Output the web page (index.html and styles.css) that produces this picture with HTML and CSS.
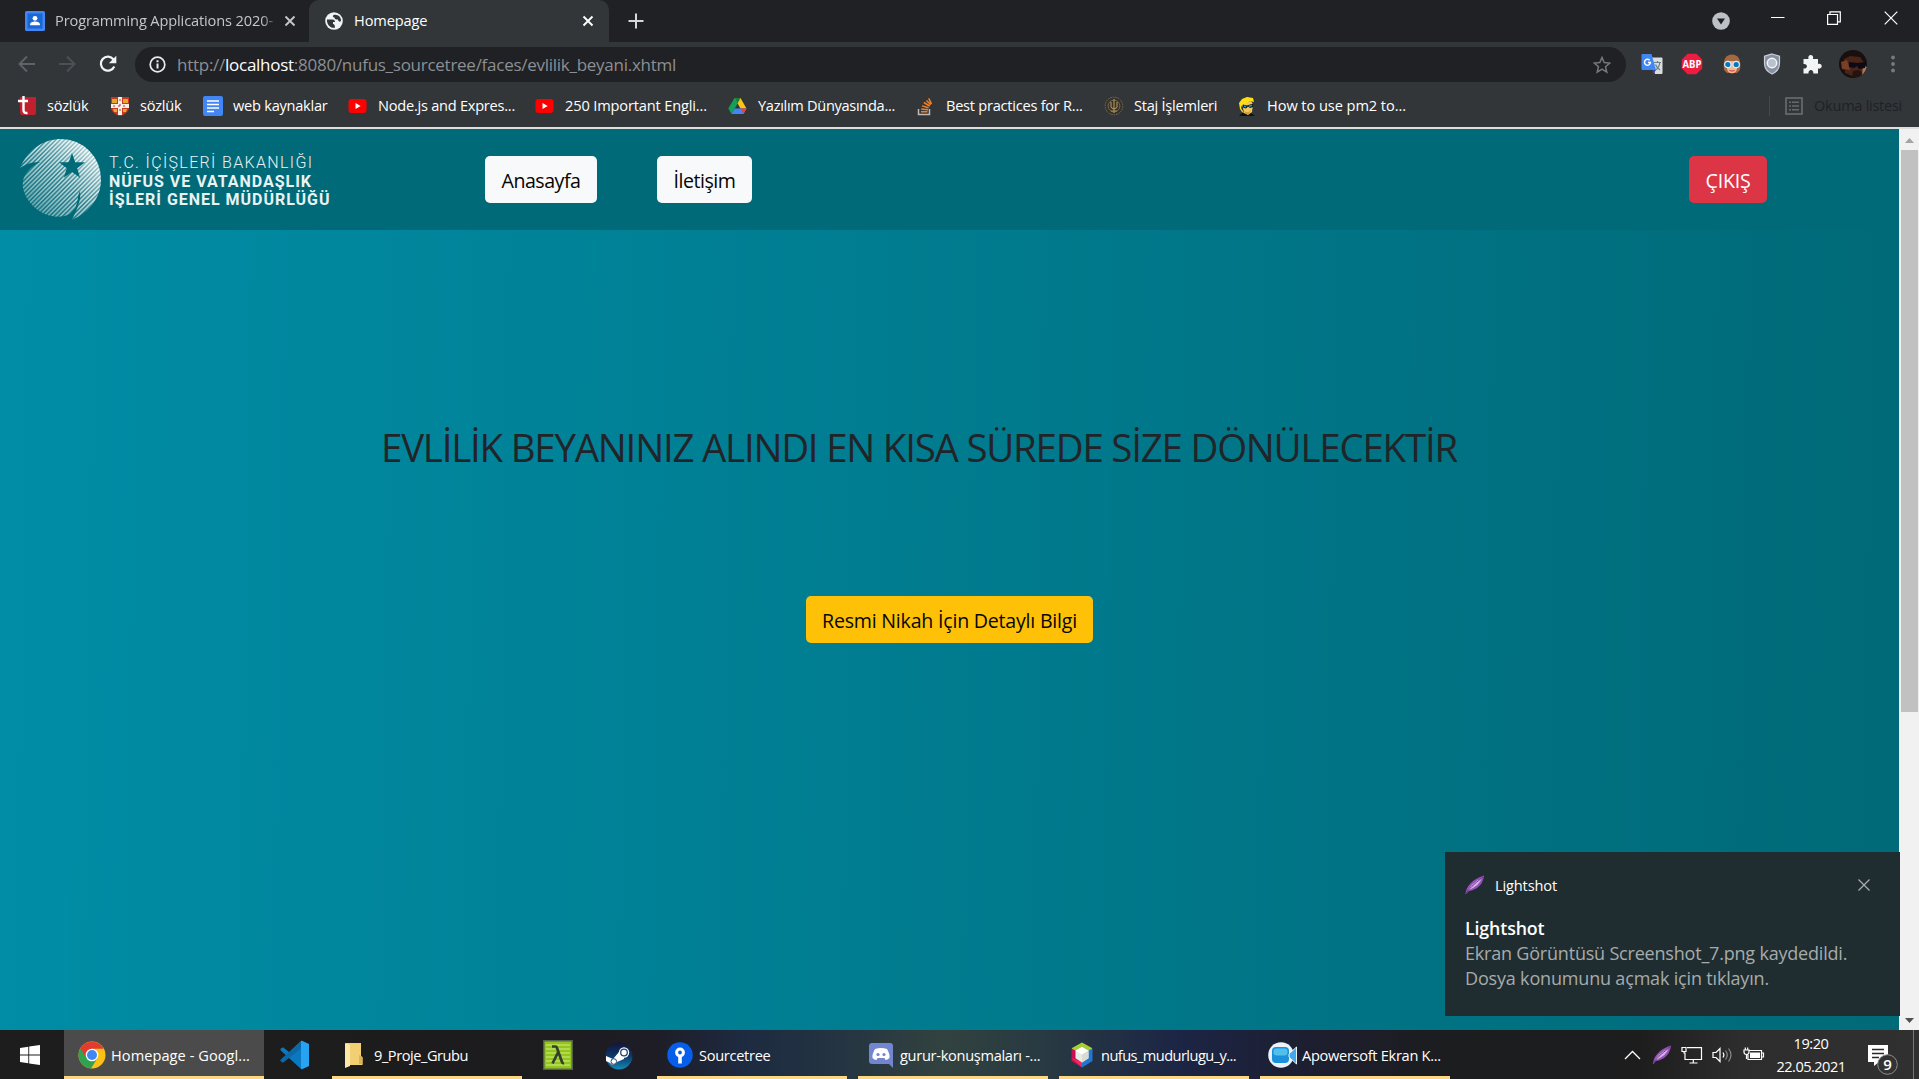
FILE: index.html
```html
<!DOCTYPE html>
<html lang="tr">
<head>
<meta charset="utf-8">
<title>Homepage</title>
<link rel="stylesheet" href="styles.css">
</head>
<body>
<div class="tabs">
  <div class="tab tab-first">
    <svg width="20" height="20" viewBox="0 0 20 20"><rect width="20" height="20" rx="1.5" fill="#4285f4"/><rect x="2.5" y="2.5" width="15" height="15" fill="#1967d2"/><circle cx="10" cy="7.3" r="2.4" fill="#fff"/><path d="M5 14.2c0-3 2.500-3.700 5-3.700s5 .7 5 3.700z" fill="#fff"/></svg>
    <span class="tab-title fade">Programming Applications 2020-</span>
    <svg class="tab-x" width="12" height="12" viewBox="0 0 12 12"><path d="M1.500 1.500l9 9m0-9l-9 9" stroke="#c4c7ca" stroke-width="1.900"/></svg>
  </div>
  <div class="tab tab-active">
    <svg width="18" height="18" viewBox="0 0 18 18"><circle cx="9" cy="9" r="8.800" fill="#f1f3f4"/><path d="M2 7.500h5.500q2.500 0 2.500 2.500h-2v2q2 0 2 3.800C5 16.500 1.500 12 2 7.500zM8.500 3q-1.500 2 1 2.500 0 2 2 2h1.500q0 2 1.800 2.300l1.200-.8C16.300 5 12.500 1.800 8.500 3z" fill="#323639"/></svg>
    <span class="tab-title">Homepage</span>
    <svg class="tab-x" width="12" height="12" viewBox="0 0 12 12"><path d="M1.500 1.500l9 9m0-9l-9 9" stroke="#fff" stroke-width="1.900"/></svg>
  </div>
  <svg class="new-tab" width="16" height="16" viewBox="0 0 16 16"><path d="M8 .5v15M.5 8h15" stroke="#d5d7d9" stroke-width="2"/></svg>
  <div class="window-controls">
    <svg width="18" height="18" viewBox="0 0 18 18"><circle cx="9" cy="9" r="8.800" fill="#bdc1c6"/><path d="M5 6.500h8l-4 6z" fill="#202124"/></svg>
    <svg width="14" height="14" viewBox="0 0 14 14"><path d="M0 6.500h13.500" stroke="#fff"/></svg>
    <svg width="14" height="14" viewBox="0 0 14 14"><path d="M.6 3.500h9.900v9.900H.6zM3 3.500V.8h10.300v10H10.500" fill="none" stroke="#fff" stroke-width="1.200"/></svg>
    <svg width="14" height="14" viewBox="0 0 14 14"><path d="M.7.7l12.600 12.600M13.300.7L.7 13.300" stroke="#fff" stroke-width="1.200"/></svg>
  </div>
</div>

<div class="toolbar">
  <svg class="back" width="18" height="18" viewBox="0 0 18 18"><path d="M17 9H2M9 1.500L1.500 9 9 16.500" fill="none" stroke="#5f6368" stroke-width="1.900"/></svg>
  <svg class="forward" width="18" height="18" viewBox="0 0 18 18"><path d="M1 9h15M9 1.500L16.500 9 9 16.500" fill="none" stroke="#4c5054" stroke-width="1.900"/></svg>
  <svg class="reload" width="18" height="18" viewBox="0 0 18 18"><path d="M15.300 11.500A7 7 0 1 1 14.500 4.500" fill="none" stroke="#f1f3f4" stroke-width="2.200"/><path d="M17.300.8v7.400H9.900z" fill="#f1f3f4"/></svg>
  <div class="address">
    <svg width="17" height="17" viewBox="0 0 17 17"><circle cx="8.500" cy="8.500" r="7.300" fill="none" stroke="#e8eaed" stroke-width="1.700"/><path d="M8.500 7.500v5M8.500 4.300v1.900" stroke="#e8eaed" stroke-width="2"/></svg>
    <span class="url">http://<b>localhost</b>:8080/nufus_sourcetree/faces/evlilik_beyani.xhtml</span>
    <svg class="star" width="18" height="18" viewBox="0 0 18 18"><path d="M9 1.500l2.200 5.100 5.500.5-4.200 3.600 1.300 5.400L9 13.200l-4.800 2.900 1.300-5.400L1.300 7.100l5.500-.5z" fill="none" stroke="#74787c" stroke-width="1.500"/></svg>
  </div>
  <div class="extensions">
    <svg width="22" height="22" viewBox="0 0 22 22"><path d="M10 4.500h10.500q1 0 1 1V20q0 1-1 1H14z" fill="#dadce0"/><path d="M13 9.500h7M16.500 8v1.500M14.500 17c3-2 4-4.500 4.300-7.500M14.500 11.500c1 2.500 2.500 4 4.500 5.500" fill="none" stroke="#6b8087" stroke-width="1.200"/><path d="M1.500 1h9l4.500 16H1.500q-1 0-1-1V2q0-1 1-1z" fill="#4286f4"/><path d="M11.500 17H15l-2.800 4z" fill="#3641b5"/><path d="M8.700 7.200A3 3 0 1 0 9.500 9.500H7" fill="none" stroke="#fff" stroke-width="1.400"/></svg>
    <svg width="22" height="22" viewBox="0 0 22 22"><path d="M6.600.8h8.800l5.800 5.800v8.800l-5.800 5.800H6.600L.8 15.400V6.600z" fill="#ed1c40"/><text x="11" y="15" text-anchor="middle" class="abp" textLength="19" lengthAdjust="spacingAndGlyphs">ABP</text></svg>
    <svg width="22" height="22" viewBox="0 0 22 22"><path d="M3 17C1.500 6 5 1.500 11 1.500S20.500 6 19 17l-3 3H6z" fill="#a5673f"/><path d="M6 9q5-2 10 0v6c0 7-10 7-10 0z" fill="#f3b795"/><circle cx="6.800" cy="11.500" r="3.200" fill="#0876b8" stroke="#d5eefc" stroke-width="1.200"/><circle cx="15.200" cy="11.500" r="3.200" fill="#0876b8" stroke="#d5eefc" stroke-width="1.200"/><path d="M8.500 17.500q2.500 1.200 5 0" stroke="#c43b35" fill="none"/></svg>
    <svg width="22" height="22" viewBox="0 0 22 22"><path d="M11 1l7.500 2.300v7c0 5-3 8.700-7.500 10.700-4.500-2-7.500-5.700-7.500-10.700v-7z" fill="#8591a3" stroke="#cbd0d8" stroke-width="1.200"/><circle cx="11" cy="10" r="4.700" fill="#b9c1cd" stroke="#f3f5f7" stroke-width="1.500"/></svg>
    <svg width="22" height="22" viewBox="0 0 22 22"><path d="M2.500 6h5c-1.500-5.500 6-5.500 4.500 0h5v5c5-1.300 5 5.800 0 4.500v5h-4.700c.7-4.700-5.500-4.700-4.800 0h-5v-5c4.600.6 4.600-5.100 0-4.500z" fill="#f1f3f4"/></svg>
    <svg width="28" height="28" viewBox="0 0 28 28"><clipPath id="face"><circle cx="14" cy="14" r="14"/></clipPath><g clip-path="url(#face)"><path fill="#17100e" d="M0 0h28v28H0z"/><path d="M5 9l6-3 10 1 5 7-1 12H13L6 23z" fill="#4a2419"/><path d="M2 12l6-2 3 10-8-1z" fill="#7a3f29"/><path d="M24 15l4 2v9l-5 1z" fill="#b07c58"/><path d="M10 12l8 1 9-1-1 6-6 1-2-3-3 2-5-1z" fill="#0b0a16"/><path d="M14 21l6-1 3 3-2 4h-8z" fill="#25130f"/></g></svg>
    <svg width="22" height="22" viewBox="0 0 22 22"><g fill="#777b7f"><circle cx="11" cy="4.500" r="1.900"/><circle cx="11" cy="11" r="1.900"/><circle cx="11" cy="17.500" r="1.900"/></g></svg>
  </div>
</div>

<div class="bookmarks">
  <div class="bm bm-a"><svg width="20" height="20" viewBox="0 0 20 20"><path fill="#c1202f" d="M3 1h15q1 0 1 1v15q0 2-2 2H5q-2 0-2-3z"/><path d="M6.500 0v14q0 3.500 4 3M1 5h10" fill="none" stroke="#fff" stroke-width="2.400"/></svg><span>sözlük</span></div>
  <div class="bm bm-b"><svg width="20" height="20" viewBox="0 0 20 20"><path d="M1 1h18v10c0 5-5 8-9 9-4-1-9-4-9-9z" fill="#c63b20"/><path d="M2 3h5v4H2zm11 0h5v4h-5zM3 13h4v3H4zm10 0h4l-1 3h-3z" fill="#e8a631"/><path d="M10 1v18M1 10h18" stroke="#f5eee8" stroke-width="4"/><path d="M10 3v14M3 10h14" stroke="#c23a33" stroke-width="1" stroke-dasharray="2 3"/></svg><span>sözlük</span></div>
  <div class="bm bm-c"><svg width="20" height="20" viewBox="0 0 20 20"><rect width="20" height="20" rx="2" fill="#4285f4"/><path d="M4 5h12M4 8.500h12M4 12h12M4 15.500h7" stroke="#fff" stroke-width="1.700"/></svg><span>web kaynaklar</span></div>
  <div class="bm bm-d"><svg width="20" height="20" viewBox="0 0 20 20"><rect x=".5" y="3" width="18" height="14" rx="3" fill="#f00"/><path d="M7.500 7l5.200 3-5.200 3z" fill="#fff"/></svg><span>Node.js and Expres...</span></div>
  <div class="bm bm-e"><svg width="20" height="20" viewBox="0 0 20 20"><rect x=".5" y="3" width="18" height="14" rx="3" fill="#f00"/><path d="M7.500 7l5.200 3-5.200 3z" fill="#fff"/></svg><span>250 Important Engli...</span></div>
  <div class="bm bm-f"><svg width="20" height="20" viewBox="0 0 20 20"><path d="M6.500 2l3.200 5.500L3.500 18 .3 12.500z" fill="#13a05b"/><path d="M6.500 2h6l6 10.500h-6z" fill="#fcc419"/><path d="M6.500 2h6L9.600 7.500z" fill="#188038"/><path d="M3.500 18l3.200-5.500h11.800L15.500 18z" fill="#4285f4"/><path d="M12.700 12.500h5.800L15.500 18z" fill="#ea4335"/></svg><span>Yazılım Dünyasında...</span></div>
  <div class="bm bm-g"><svg width="20" height="20" viewBox="0 0 20 20"><path d="M2.500 13v5.500h11V13" fill="none" stroke="#bcbbbb" stroke-width="1.500"/><path d="M5 15.800h6.500M5.200 12.900l6.900.8M6 9.900l6.600 1.900M7.800 6.500l5.900 3.500M10.500 4.400l4.300 4.400M12.700 2.300l2.800 5.500" stroke="#f48024" stroke-width="1.500"/></svg><span>Best practices for R...</span></div>
  <div class="bm bm-h"><svg width="20" height="20" viewBox="0 0 20 20"><circle cx="10" cy="10" r="8.800" fill="#35322c" stroke="#77705c" stroke-dasharray="1.500 1"/><circle cx="10" cy="10" r="5.900" fill="none" stroke="#756a4e"/><path d="M10 3v14M7 6v5q3 4 6 0V6M7 15h6" fill="none" stroke="#a98e57" stroke-width="1.200"/></svg><span>Staj İşlemleri</span></div>
  <div class="bm bm-i"><svg width="20" height="20" viewBox="0 0 20 20"><path d="M2 20l3-3h9l4 3z" fill="#111"/><path d="M5 7l9-2 2 3-1 8-4 3-4-2z" fill="#f2c75b"/><path d="M3 13L2 7l3-4 5-2 6 1 1 4-4-1-5 3-3 1-1 3 3 5-2-1z" fill="#ffdf12"/><path d="M6 8.500l4 1 6-2v3.500l-3 1-2-1.500-2 2-3-1z" fill="#101923"/><path d="M7 10l2 .7M12 10.300l3-1" stroke="#159cea" stroke-width="1.500"/><path d="M7 15q4 3 7-1l-2 4H9z" fill="#d49c22"/></svg><span>How to use pm2 to...</span></div>
  <div class="reading"><svg width="18" height="18" viewBox="0 0 18 18"><rect x="1" y="1" width="16" height="16" fill="none" stroke="#666a6e" stroke-width="1.700"/><path d="M4 5.300h2m1 0h7M4 9h2m1 0h7M4 12.700h2m1 0h7" stroke="#666a6e" stroke-width="1.500"/></svg><span>Okuma listesi</span></div>
</div>

<div class="viewport">
  <div class="page">
    <header class="site-header">
      <div class="logo">
        <svg width="84" height="84" viewBox="0 0 84 84">
          <defs>
            <linearGradient id="shine" x1="1" y1="0" x2="0" y2="1"><stop offset=".15" stop-color="#fff"/><stop offset=".5" stop-color="#fff" stop-opacity=".78"/><stop offset=".9" stop-color="#fff" stop-opacity=".4"/></linearGradient>
            <linearGradient id="glow" x1="1" y1="0" x2="0" y2="1"><stop offset=".1" stop-color="#fff" stop-opacity=".75"/><stop offset=".5" stop-color="#fff" stop-opacity=".15"/><stop offset=".8" stop-color="#fff" stop-opacity=".08"/></linearGradient>
            <pattern id="lines" width="3.100" height="3.100" patternUnits="userSpaceOnUse" patternTransform="rotate(-45)"><path d="M0 1h3.100" stroke="#fff" stroke-width="1.600"/></pattern>
            <mask id="stripes"><path fill="url(#lines)" d="M0 0h84v84H0z"/><path d="M0 0h84v84H0z" fill="url(#glow)"/></mask>
          </defs>
          <path mask="url(#stripes)" fill="url(#shine)" d="M1 30C10 9 27 1 42 1a40 40 0 0 1 40 40C82 59 72 73 53 82l7-16-9 10C32 85 8 70 4 50c-2-12 6-20 17-26C13 24 7 26 1 30z"/>
          <path d="M53 15l3.200 9.200H66l-7.800 6 2.900 9.500-8.100-5.700-8.200 5.700 3-9.500-7.800-6h9.800z" fill="#006a78"/>
          <path d="M61 53q1 8-2 14l-4 6q4-9 4-15z" fill="#006a78"/>
        </svg>
        <div class="logo-text"><span class="l1">T.C. İÇİŞLERİ BAKANLIĞI</span><span class="l2">NÜFUS VE VATANDAŞLIK</span><span class="l3">İŞLERİ GENEL MÜDÜRLÜĞÜ</span></div>
      </div>
      <a class="btn btn-light home">Anasayfa</a>
      <a class="btn btn-light contact">İletişim</a>
      <a class="btn btn-danger">ÇIKIŞ</a>
    </header>
    <main>
      <h2>EVLİLİK BEYANINIZ ALINDI EN KISA SÜREDE SİZE DÖNÜLECEKTİR</h2>
      <a class="btn btn-warning">Resmi Nikah İçin Detaylı Bilgi</a>
    </main>
  </div>
  <div class="scrollbar">
    <svg width="9" height="5" viewBox="0 0 9 5"><path d="M0 5l4.500-5L9 5z" fill="#a3a3a3"/></svg>
    <div class="thumb"></div>
    <svg class="down" width="9" height="5" viewBox="0 0 9 5"><path d="M0 0l4.500 5L9 0z" fill="#505050"/></svg>
  </div>
  <div class="toast">
    <div class="toast-head">
      <svg width="20" height="20" viewBox="0 0 20 20"><path d="M.5 19.500C.5 11 8 4 19 .5 18.500 9 12 15 4 16z" fill="#9450b8"/><path d="M3 15C7 9 11 6 17 3 15 8 11 12 5 14.500z" fill="#d5b4e6"/><path d="M1 18.500C6 11 12 7 18 2" stroke="#6e3591" fill="none"/></svg>
      <span>Lightshot</span>
      <svg class="toast-x" width="12" height="12" viewBox="0 0 12 12"><path d="M.5.5l11 11m0-11l-11 11" stroke="#a9adae" stroke-width="1.200"/></svg>
    </div>
    <strong>Lightshot</strong>
    <p class="t1">Ekran Görüntüsü Screenshot_7.png kaydedildi.</p>
    <p class="t2">Dosya konumunu açmak için tıklayın.</p>
  </div>
</div>

<div class="taskbar">
  <div class="start"><svg width="20" height="20" viewBox="0 0 20 20"><path d="M0 2.900L8.300 1.700v7.800H0zM9.200 1.600L20 0v9.500H9.200zM0 10.400h8.300v7.900L0 17.100zM9.200 10.400H20V20L9.200 18.400z" fill="#fff"/></svg></div>
  <div class="task task-chrome active"><svg width="28" height="28" viewBox="0 0 28 28"><circle cx="14" cy="14" r="13.500" fill="#fbc116"/><path d="M14 14L2.300 7.200A13.500 13.500 0 0 0 13 27.500L19.500 17z" fill="#31a350"/><path d="M14 14L8.500 17.200 2.300 7.200A13.500 13.500 0 0 1 25.700 7.800H14z" fill="#e33b2e"/><circle cx="14" cy="14" r="6.300" fill="#fff"/><circle cx="14" cy="14" r="5" fill="#4285f4"/></svg><span>Homepage - Googl...</span></div>
  <div class="app vscode"><svg width="30" height="30" viewBox="0 0 30 30"><path d="M21 1L9.300 12.200 3 7.300.5 8.800v1.500L21 29z" fill="#0a79bf"/><path d="M.5 19.700L21 1v7.500L3 22.700.5 21.200z" fill="#0b69a8"/><path d="M21.500.5L29 4v22l-7.500 3.500L21 28V2z" fill="#26a4f1"/></svg></div>
  <div class="task task-folder"><svg width="18" height="26" viewBox="0 0 18 26"><path d="M1 1h15v13l1.500 1.500V23H5L1 25z" fill="#f3cf73"/><path d="M0 1l5 2v21l-5 2z" fill="#fce9a7"/><path d="M14 13l3.500 2v7H14z" fill="#dfb352"/></svg><span>9_Proje_Grubu</span></div>
  <div class="app lambda"><svg width="30" height="30" viewBox="0 0 30 30"><path fill="#92c51d" stroke="#57624a" stroke-width="1.500" d="M.8.8h28.400v28.400H.8z"/><path d="M3 5h24M3 9h24M3 13h24M3 17h24M3 21h24M3 25h24" stroke="#bddf62" stroke-width="1.400"/><path d="M9 6.500h3.500q1 0 1.500 1.500l5 14q.5 1.500 2 1M15 12.500l-5.500 11" fill="none" stroke="#33402b" stroke-width="2.700"/></svg></div>
  <div class="app steam"><svg width="28" height="28" viewBox="0 0 28 28"><defs><linearGradient id="steam" x2="0" y2="1"><stop stop-color="#13143a"/><stop offset=".5" stop-color="#0b3768"/><stop offset="1" stop-color="#168ab8"/></linearGradient></defs><circle cx="14" cy="14" r="13.500" fill="url(#steam)"/><path d="M1 14l7 3 6-7h5v7l-7 3a4 4 0 0 1-7 1l-4-2z" fill="#fff"/><circle cx="19" cy="10.500" r="5.200" fill="#fff"/><circle cx="19" cy="10.500" r="3.300" fill="#fff" stroke="#24456f" stroke-width="1.300"/><circle cx="8.800" cy="19.500" r="2.800" fill="#fff" stroke="#24456f"/></svg></div>
  <div class="task task-source"><svg width="26" height="26" viewBox="0 0 26 26"><circle cx="13" cy="13" r="12.800" fill="#075eea"/><path d="M11.200 12h3.600v9.500h-3.600z" fill="#fff"/><circle cx="13" cy="10.500" r="3.400" fill="#075eea" stroke="#fff" stroke-width="3"/></svg><span>Sourcetree</span></div>
  <div class="task task-discord"><svg width="24" height="26" viewBox="0 0 24 26"><path d="M3 1h18q3 0 3 3v22l-4-4H3q-3 0-3-3V4q0-3 3-3z" fill="#7385cf"/><path d="M6 7q6-2 12 0 3 5 2.500 9-2 2-4 2l-1-2h-7l-1 2q-2 0-4-2Q3 12 6 7z" fill="#fff"/><circle cx="9" cy="12.500" r="1.600" fill="#7385cf"/><circle cx="15" cy="12.500" r="1.600" fill="#7385cf"/></svg><span>gurur-konuşmaları -...</span></div>
  <div class="task task-net"><svg width="22" height="26" viewBox="0 0 22 26"><path d="M11 .5L21 6v4l-10 4L1 10V6z" fill="#a6ce35"/><path d="M.5 6.500L11 12v13.500L.5 19z" fill="#c90f50"/><path d="M.5 16L11 25.500 14 21z" fill="#ec2c61"/><path d="M21.500 6.500V19L11 25.500V12z" fill="#2475d0"/><path d="M11 5l6.500 3.800v7.400L11 20.500l-6.500-4.300V8.800z" fill="#e9ece4"/><path d="M11 5l6.500 3.800L11 12.500 4.500 8.800z" fill="#fff"/><path d="M11 12.500l6.500-3.700v7.400L11 20.500z" fill="#d8dcd2"/></svg><span>nufus_mudurlugu_y...</span></div>
  <div class="task task-rec"><svg width="30" height="28" viewBox="0 0 30 28"><circle cx="13" cy="14" r="12.800" fill="#eaf3fc"/><rect x="4" y="6" width="17" height="16" rx="4" fill="#1b91dd"/><rect x="5.500" y="7.500" width="14" height="7" rx="3" fill="#51c1ec"/><path d="M21 13l7.500-7v17L21 16z" fill="#43a7ea" stroke="#e6f5ff"/></svg><span>Apowersoft Ekran K...</span></div>
  <div class="tray">
    <svg width="17" height="20" viewBox="0 0 17 20"><path d="M1 14l7.500-7.500L16 14" fill="none" stroke="#fff" stroke-width="1.300"/></svg>
    <svg width="20" height="20" viewBox="0 0 20 20"><path d="M1 19.500C1 11 8 4 19 .5 18.500 9 12 15 4 16z" fill="#9450b8"/><path d="M3 15C7 9 11 6 17 3 15 8 11 12 5 14.500z" fill="#d5b4e6"/><path d="M1 18.500C6 11 12 7 18 2" stroke="#6e3591" fill="none"/></svg>
    <svg width="22" height="20" viewBox="0 0 22 20"><path d="M6 2.600h14.500v11.900H4V7.500M12.300 14.500v3.500M8.500 18h8M1 2.500h4v4H1zM3 6.500v2" fill="none" stroke="#fff" stroke-width="1.200"/></svg>
    <svg width="22" height="20" viewBox="0 0 22 20"><path d="M1 7.500h3l4-4v13l-4-4H1zM11 7.500q1.800 2.500 0 5" fill="none" stroke="#fff" stroke-width="1.200"/><path d="M13.500 5.500q3.500 4.500 0 9M16.500 3.500q5 6.500 0 13" fill="none" stroke="#8b8b8b" stroke-width="1.200"/></svg>
    <svg width="22" height="20" viewBox="0 0 22 20"><path d="M6 5.500h12.500v9H5V10M18.500 8h2v4h-2M1 5h5v2q0 2.500-2.500 2.500T1 7zM2.300 5V2.500M4.700 5V2.500M3.500 9.500V14" fill="none" stroke="#fff" stroke-width="1.200"/><path fill="#fff" d="M7 7.500h10v5.500H7z"/></svg>
  </div>
  <div class="clock"><span class="time">19:20</span><span class="date">22.05.2021</span></div>
  <div class="notice"><svg width="32" height="32" viewBox="0 0 32 32"><path d="M1 1h20v17h-9l-5 4v-4H1z" fill="#fff"/><path d="M5 5.500h12M5 9.500h12M5 13.500h7" stroke="#292929" stroke-width="1.300"/><circle cx="20.500" cy="20.500" r="9.800" fill="#333" stroke="#8d8d8d"/><text x="20.500" y="26" text-anchor="middle" class="count">9</text></svg></div>
</div>
</body>
</html>
```
FILE: styles.css
```css
* { box-sizing: border-box; }
body { margin: 0; width: 1919px; height: 1079px; overflow: hidden; display: flex; flex-direction: column; font-family: "Open Sans", "Noto Sans", sans-serif; font-size: 14.6px; color: #fff; }
svg { display: block; flex: none; }
span, p, h2, a, strong { white-space: nowrap; }
p, h2 { margin: 0; }

.tabs { height: 42px; background: #202124; display: flex; align-items: center; }
.tab { height: 42px; display: flex; align-items: center; flex: none; }
.tab-first { width: 309px; padding: 0 13px 0 25px; gap: 10px; color: #c3c6ca; }
.tab-title { letter-spacing: -.13px; padding-bottom: 2px; }
.fade { width: 219px; overflow: hidden; -webkit-mask-image: linear-gradient(90deg, #000 94%, rgba(0, 0, 0, .3)); mask-image: linear-gradient(90deg, #000 94%, rgba(0, 0, 0, .3)); }
.tab-x { margin-left: auto; }
.tab-active { width: 300px; background: #323639; border-radius: 10px 10px 0 0; padding: 0 15px 0 16px; gap: 11px; }
.new-tab { margin-left: 19px; }
.window-controls { margin-left: auto; display: flex; align-items: center; padding-right: 21px; }
.window-controls svg { margin-top: -6px; }
.window-controls svg:nth-child(1) { margin: 0 41px 0 0; }
.window-controls svg:nth-child(2) { margin-right: 42px; }
.window-controls svg:nth-child(3) { margin-right: 43px; }

.toolbar { height: 43px; background: #323639; display: flex; align-items: center; padding-left: 18px; }
.back { margin-right: 22px; }
.forward { margin-right: 23px; }
.reload { margin-right: 18px; }
.address { width: 1491px; height: 35px; margin-top: 2px; border-radius: 18px; background: #202124; display: flex; align-items: center; padding: 0 15px 0 14px; }
.url { margin-left: 11px; font-size: 17px; letter-spacing: -.265px; color: #8c8f93; }
.url b { color: #fff; font-weight: 400; }
.star { margin-left: auto; }
.extensions { display: flex; align-items: center; gap: 18px; margin-left: 15px; }
.extensions svg:nth-child(6) { margin: 0 -3px 0 -2px; }
.abp { font: 700 10.500px "Open Sans", sans-serif; fill: #fff; }

.bookmarks { height: 44px; border-bottom: 2px solid #dedede; background: #323639; display: flex; align-items: center; padding-left: 17px; }
.bookmarks span { padding-bottom: 2px; }
.bookmarks svg { margin-top: -1px; }
.bm { display: flex; align-items: center; gap: 10px; flex: none; letter-spacing: -.25px; }
.bm-a { width: 93px; }
.bm-b { width: 93px; }
.bm-c { width: 145px; }
.bm-d { width: 187px; }
.bm-e { width: 193px; letter-spacing: -.15px; }
.bm-f { width: 188px; letter-spacing: -.31px; }
.bm-g { width: 188px; }
.bm-h { width: 133px; }
.bm-i { letter-spacing: -.07px; }
.reading { margin: 0 17px 0 auto; height: 20px; border-left: 1px solid #46494c; padding-left: 15px; display: flex; align-items: center; gap: 11px; letter-spacing: -.29px; color: #202124; }

.viewport { height: 901px; position: relative; display: flex; background: linear-gradient(91deg, #008da6, #006a78 1899px); }
.page { width: 1899px; }
.site-header { height: 101px; background: #006a78; display: flex; align-items: flex-start; padding-left: 19px; }
.logo { width: 466px; display: flex; gap: 6px; padding-top: 9px; }
.logo-text { display: flex; flex-direction: column; padding-top: 16px; font: 700 16px/18.500px Roboto, sans-serif; letter-spacing: .97px; color: #e9f3f4; }
.l1 { font-weight: 300; letter-spacing: 1.350px; }
.btn { display: flex; align-items: center; justify-content: center; height: 47px; border-radius: 5px; padding-top: 1px; font-size: 19.600px; letter-spacing: -.48px; }
.site-header .btn { margin-top: 27px; }
.btn-light { background: #f8f9fa; color: #050505; }
.home { width: 112px; margin-right: 60px; }
.contact { width: 95px; }
.btn-danger { width: 78px; margin: 0 132px 0 auto; background: #dc3545; letter-spacing: -.2px; }
main { display: flex; flex-direction: column; }
h2 { margin: 187px 0 0 381px; height: 60px; font-size: 38.500px; line-height: 60px; font-weight: 400; letter-spacing: -1.240px; color: #212529; }
.btn-warning { width: 287px; margin: 119px 0 0 806px; background: #ffc107; color: #080800; letter-spacing: -.22px; }

.scrollbar { width: 20px; background: #f1f1f1; display: flex; flex-direction: column; align-items: center; padding-top: 9px; }
.thumb { width: 17px; height: 562px; margin-top: 7px; background: #c1c1c1; }
.down { margin: auto 0 7px; }

.toast { position: absolute; left: 1445px; top: 723px; width: 455px; height: 164px; background: #202d30; padding: 22px 30px 0 20px; }
.toast-head { display: flex; align-items: center; height: 22px; gap: 10px; letter-spacing: -.14px; }
.toast-x { margin-left: auto; }
.toast strong { display: block; margin-top: 20px; font-weight: 600; font-size: 17.800px; line-height: 25px; letter-spacing: -.13px; }
.toast p { font-size: 18px; line-height: 25px; color: #a6abac; letter-spacing: -.2px; }
.toast .t2 { letter-spacing: -.175px; }

.taskbar { height: 49px; display: flex; background: linear-gradient(90deg, #1d1d1d 0, #1c1c1e 500px, #1e1c25 650px, #1d2a40 740px, #243442 840px, #32423f 940px, #283a42 1040px, #1c2545 1180px, #1d1e30 1310px, #1c1d20 1430px, #1d1d1e 1640px, #2d2d2d 1740px, #303030 1919px); }
.taskbar > div { flex: none; }
.start { width: 64px; padding: 15px 0 0 20px; }
.task { width: 190px; display: flex; align-items: center; border-bottom: 3px solid #fcd884; margin-right: 11px; padding-top: 3px; letter-spacing: -.3px; }
.active { width: 200px; background: #4b4b4b; padding-left: 14px; gap: 5px; margin-right: 16px; letter-spacing: .05px; }
.app { padding-top: 10px; }
.vscode { width: 52px; }
.task-folder { padding-left: 13px; gap: 11px; letter-spacing: -.45px; margin-right: 21px; }
.lambda { width: 62px; }
.steam { width: 52px; padding-top: 12px; }
.task-source { padding-left: 10px; gap: 6px; }
.task-discord { padding-left: 11px; gap: 7px; }
.task-net { padding-left: 12px; gap: 8px; letter-spacing: -.55px; }
.task-rec { padding-left: 8px; gap: 4px; }
.tray { display: flex; align-items: center; gap: 9px; margin-left: 163px; height: 49px; }
.tray svg:first-child { margin-right: 2px; }
.clock { width: 92px; display: flex; flex-direction: column; align-items: center; line-height: 23px; padding-top: 2px; letter-spacing: -.45px; }
.date { letter-spacing: -.54px; }
.notice { width: 57px; padding: 14px 0 0 10px; border-right: 1px solid #777; }
.count { font: 600 15px "Open Sans", sans-serif; fill: #fff; }
```
